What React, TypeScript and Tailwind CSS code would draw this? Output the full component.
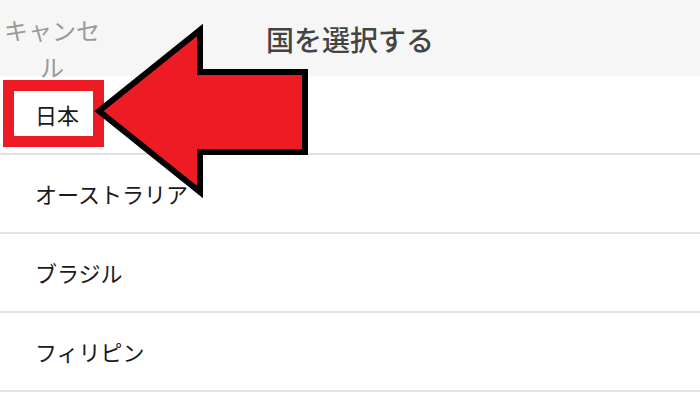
import React from 'react'

const countries: string[] = ['日本', 'オーストラリア', 'ブラジル', 'フィリピン']

const font = { fontFamily: '"Noto Sans CJK JP", "Noto Sans", sans-serif' }

const App = (): React.ReactElement => {
  return (
    <div className="relative w-[700px] h-[410px] overflow-hidden bg-white" style={font}>
      {/* header */}
      <div className="grid grid-cols-[104px_1fr_104px] h-[76px] bg-[#f6f6f6]">
        <div className="pt-[11px] text-center text-[24px] leading-[37px] text-[#9a9a9a]">キャンセル</div>
        <div className="flex items-center justify-center pb-[8px] text-[28px] font-medium text-[#444444]">
          国を選択する
        </div>
        <div />
      </div>

      {/* list */}
      <ul>
        {countries.map((name: string) => (
          <li
            key={name}
            className="flex items-center h-[79px] pl-[35px] border-b-2 border-[#e2e2e2] text-[22px] text-[#1a1a1a]"
          >
            {name}
          </li>
        ))}
      </ul>

      {/* annotation: highlight box + arrow */}
      <div className="absolute left-[3px] top-[80px] w-[101px] h-[67px] border-[11px] border-[#ed1c24]" />
      <svg className="absolute left-0 top-0" width="700" height="410" viewBox="0 0 700 410">
        <polygon
          points="99,111 200,30 200,72 305,72 305,152 200,152 200,192"
          fill="#ed1c24"
          stroke="#000"
          strokeWidth="6"
          strokeLinejoin="miter"
          strokeMiterlimit="10"
        />
      </svg>
    </div>
  )
}

export default App
